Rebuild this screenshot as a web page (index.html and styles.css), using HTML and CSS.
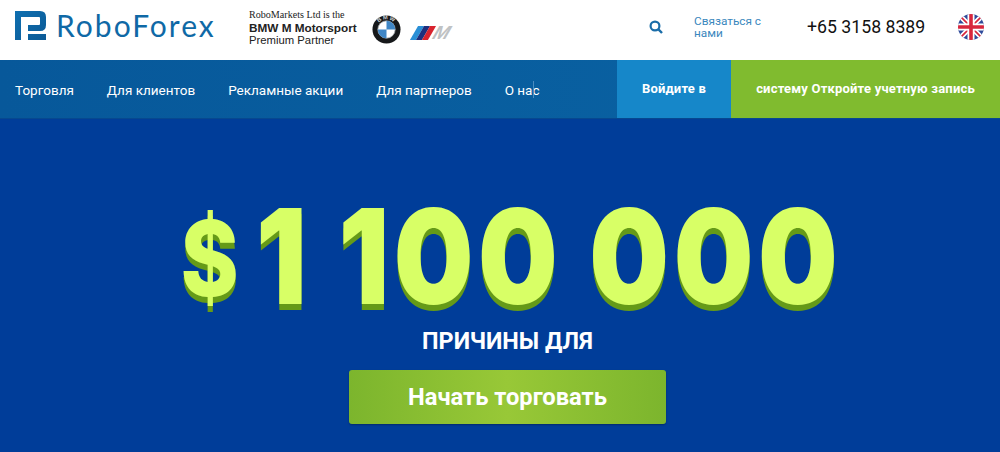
FILE: index.html
```html
<!DOCTYPE html>
<html lang="ru">
<head>
    <meta charset="UTF-8">
    <meta name="viewport" content="width=device-width, initial-scale=1.0">
    <title>RoboForex</title>
    <link rel="stylesheet" href="styles.css">
</head>
<body>

    <!-- Top bar -->
    <header class="top-bar">
        <a class="logo" href="#">
            <svg class="logo-mark" width="31" height="29" viewBox="0 0 31 29">
                <defs>
                    <linearGradient id="markBlue" x1="0" y1="0" x2="1" y2="1">
                        <stop offset="0" stop-color="#0f6fb0"/>
                        <stop offset="1" stop-color="#0b5a96"/>
                    </linearGradient>
                </defs>
                <path fill="url(#markBlue)" d="M0 0H25Q31 0 31 6V14Q31 20 25 20H13V14H24Q25 14 25 13V7Q25 6 24 6H6V29H0ZM13 23H31V29H13Z"/>
            </svg>
            <span class="logo-text">RoboForex</span>
        </a>

        <div class="partner">
            <span class="partner-line1">RoboMarkets Ltd is the</span>
            <span class="partner-line2">BMW M Motorsport</span>
            <span class="partner-line3">Premium Partner</span>
        </div>

        <svg class="bmw" width="29" height="29" viewBox="0 0 30 30">
            <defs>
                <path id="bmwArc" d="M4.500 15A10.500 10.500 0 0 1 25.500 15"/>
            </defs>
            <circle cx="15" cy="15" r="14.500" fill="#16181a"/>
            <text class="bmw-letters"><textPath href="#bmwArc" startOffset="50%" text-anchor="middle">BMW</textPath></text>
            <circle cx="15" cy="15" r="9" fill="#fff" stroke="#9aa0a4" stroke-width="0.800"/>
            <path fill="#3f86c6" d="M15 6A9 9 0 0 1 24 15H15ZM15 24A9 9 0 0 1 6 15H15Z"/>
        </svg>

        <div class="m-badge">
            <span class="m-stripes">
                <i class="stripe-blue"></i>
                <i class="stripe-navy"></i>
                <i class="stripe-red"></i>
            </span>
            <span class="m-letter">M</span>
        </div>

        <svg class="search-icon" width="14" height="14" viewBox="0 0 14 14">
            <circle cx="6" cy="6" r="4.400" fill="none" stroke="#1a6da8" stroke-width="2.200"/>
            <path d="M9.200 9.200L13 13" stroke="#1a6da8" stroke-width="2.400"/>
        </svg>

        <a class="contact" href="#">Связаться с нами</a>
        <span class="phone">+65 3158 8389</span>

        <svg class="flag" width="26" height="26" viewBox="0 0 26 26">
            <defs>
                <clipPath id="flagClip"><circle cx="13" cy="13" r="13"/></clipPath>
            </defs>
            <g clip-path="url(#flagClip)">
                <rect width="26" height="26" fill="#2f4a9a"/>
                <path d="M0 0L26 26M26 0L0 26" stroke="#fff" stroke-width="5"/>
                <path d="M0 0L26 26M26 0L0 26" stroke="#d8263c" stroke-width="1.600"/>
                <path d="M13 0V26M0 13H26" stroke="#fff" stroke-width="7"/>
                <path d="M13 0V26M0 13H26" stroke="#d8263c" stroke-width="3.600"/>
            </g>
        </svg>
    </header>

    <!-- Main menu -->
    <nav class="main-nav">
        <ul class="nav-links">
            <li><a href="#">Торговля</a></li>
            <li><a href="#">Для клиентов</a></li>
            <li><a href="#">Рекламные акции</a></li>
            <li><a href="#">Для партнеров</a></li>
            <li class="has-caret"><a href="#">О нас</a><span class="caret"></span></li>
        </ul>
        <a class="nav-login" href="#">Войдите в</a>
        <a class="nav-open" href="#">систему Откройте учетную запись</a>
    </nav>

    <!-- Hero -->
    <main class="hero">
        <h1 class="hero-amount"><span class="dollar">$</span>1 100 000</h1>
        <p class="hero-caption">ПРИЧИНЫ ДЛЯ</p>
        <a class="hero-button" href="#">Начать торговать</a>
    </main>

</body>
</html>
```

FILE: styles.css
```css
/* General */
* {
    box-sizing: border-box;
}

body {
    margin: 0;
    height: 452px;
    overflow: hidden;
    font-family: 'Roboto', sans-serif;
    background-color: #003d99;
}

a {
    color: inherit;
    text-decoration: none;
}

/* Top bar */
.top-bar {
    display: flex;
    align-items: center;
    height: 60px;
    background-color: #fff;
    padding: 0 0 6px 15px;
}

.logo {
    display: flex;
    align-items: center;
    width: 234px;
    margin-top: -4px;
}

.logo-text {
    margin-left: 10px;
    font-family: 'Lato', sans-serif;
    font-size: 30px;
    letter-spacing: 2px;
    color: #0f69a6;
}

.partner {
    display: flex;
    flex-direction: column;
    width: 123px;
    color: #222;
    line-height: 13px;
}

.partner-line1 {
    font-family: 'Liberation Serif', serif;
    font-size: 10.100px;
}

.partner-line2 {
    font-family: 'Liberation Sans', sans-serif;
    font-weight: 700;
    font-size: 11.750px;
}

.partner-line3 {
    font-family: 'Liberation Sans', sans-serif;
    font-size: 11.300px;
}

.bmw {
    flex-shrink: 0;
    margin-top: 5px;
}

.bmw-letters {
    font-family: 'Liberation Sans', sans-serif;
    font-size: 6px;
    font-weight: 700;
    letter-spacing: 1px;
    fill: #c9cdd0;
}

.m-badge {
    display: flex;
    align-items: center;
    width: 40px;
    height: 14px;
    margin: 11px 0 0 13px;
    transform: skewX(-30deg);
}

.m-stripes {
    display: flex;
    height: 14px;
}

.m-stripes i {
    display: block;
    width: 6px;
}

.stripe-blue { background-color: #2a8fd6; }
.stripe-navy { background-color: #1d2f7d; }
.stripe-red { background-color: #d8232e; }

.m-letter {
    margin-left: 2px;
    font-family: 'Liberation Sans', sans-serif;
    font-weight: 700;
    font-size: 19px;
    line-height: 14px;
    color: #bfc2c4;
}

.search-icon {
    margin-left: 195px;
}

.contact {
    width: 80px;
    margin-left: 31px;
    font-size: 11.800px;
    line-height: 12px;
    color: #3a87bd;
}

.phone {
    margin-left: 33px;
    font-size: 17.700px;
    color: #111;
}

.flag {
    margin-left: 33px;
}

/* Main menu */
.main-nav {
    display: flex;
    height: 58px;
    background: linear-gradient(90deg, #07589a, #0a64a4);
    color: #fff;
}

.nav-links {
    display: flex;
    align-items: center;
    gap: 33px;
    width: 617px;
    margin: 0;
    padding: 2px 0 0 15px;
    list-style: none;
    font-size: 13.500px;
}

.has-caret {
    position: relative;
}

.caret {
    position: absolute;
    top: -1px;
    right: 6px;
    width: 1px;
    height: 17px;
    background-color: #4d8dc0;
}

.nav-login,
.nav-open {
    display: flex;
    align-items: center;
    justify-content: center;
    font-size: 13px;
    font-weight: 700;
    letter-spacing: 0.200px;
    padding-bottom: 1px;
}

.nav-login {
    width: 114px;
    background-color: #1687c9;
}

.nav-open {
    flex: 1;
    background-color: #80bb2f;
}

/* Hero */
.hero {
    display: flex;
    flex-direction: column;
    align-items: center;
    height: 334px;
    padding-left: 15px;
    background-color: #003d99;
    border-top: 1px solid #07488f;
}

/* Inter is rounder than the real face, so it gets squeezed a bit */
.hero-amount {
    margin: 87px 0 0 7px;
    font-family: 'Inter', sans-serif;
    font-weight: 900;
    font-size: 132px;
    line-height: 100px;
    letter-spacing: 5.400px;
    color: #d8ff66;
    white-space: nowrap;
    text-shadow: 0 6px 0 #659a18;
    transform: scaleX(0.85);
}

.dollar {
    margin-right: 15px;
    font-size: 104px;
    font-weight: 800;
    line-height: 0;
    vertical-align: 8px;
}

.hero-caption {
    margin: 21px 0 0;
    font-size: 23.400px;
    line-height: 28px;
    font-weight: 700;
    color: #fff;
}

.hero-button {
    display: flex;
    align-items: center;
    justify-content: center;
    width: 317px;
    height: 54px;
    margin-top: 15px;
    border-radius: 3px;
    background: linear-gradient(90deg, #7cb52d, #98c837 50%, #7cb52d);
    box-shadow: 0 1px 2px rgba(0, 0, 0, 0.3);
    color: #fff;
    font-size: 23.700px;
    font-weight: 700;
}
```
